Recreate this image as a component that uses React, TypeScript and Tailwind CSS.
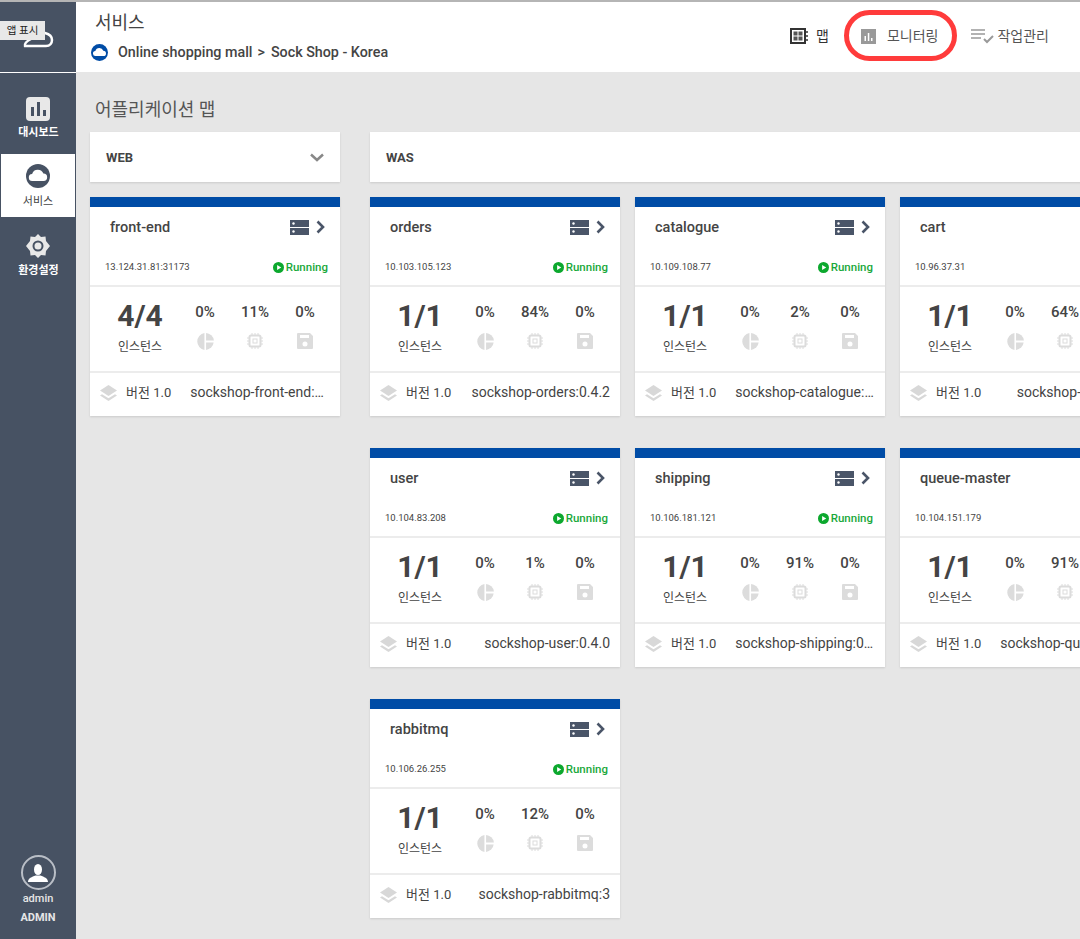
const services = [
    { name: 'orders', ip: '10.103.105.123', running: true, inst: '1/1', cpu: '0%', mem: '84%', disk: '0%', image: 'sockshop-orders:0.4.2' },
    { name: 'catalogue', ip: '10.109.108.77', running: true, inst: '1/1', cpu: '0%', mem: '2%', disk: '0%', image: 'sockshop-catalogue:0.3.5' },
    { name: 'cart', ip: '10.96.37.31', running: true, inst: '1/1', cpu: '0%', mem: '64%', disk: '0%', image: 'sockshop-cart:0.4.0' },
    { name: 'user', ip: '10.104.83.208', running: true, inst: '1/1', cpu: '0%', mem: '1%', disk: '0%', image: 'sockshop-user:0.4.0' },
    { name: 'shipping', ip: '10.106.181.121', running: true, inst: '1/1', cpu: '0%', mem: '91%', disk: '0%', image: 'sockshop-shipping:0.4.8' },
    { name: 'queue-master', ip: '10.104.151.179', running: true, inst: '1/1', cpu: '0%', mem: '91%', disk: '0%', image: 'sockshop-queue-master:0.3.1' },
    { name: 'rabbitmq', ip: '10.106.26.255', running: true, inst: '1/1', cpu: '0%', mem: '12%', disk: '0%', image: 'sockshop-rabbitmq:3' },
];

const frontEnd = { name: 'front-end', ip: '13.124.31.81:31173', running: true, inst: '4/4', cpu: '0%', mem: '11%', disk: '0%', image: 'sockshop-front-end:0.3.12' };

type Service = typeof frontEnd;

function CloudBadge({ className, fill }: { className: string; fill: string }) {
    return (
        <svg className={className} viewBox="0 0 24 24">
            <circle cx="12" cy="12" r="12" fill={fill} />
            <path d="M6.5 17a3.5 3.5 0 0 1-.4-7A6 6 0 0 1 17.4 9.6 3.7 3.7 0 0 1 17.5 17z" fill="#fff" />
        </svg>
    );
}

function ServerIcon() {
    return (
        <svg className="w-[19px] h-[15px]" viewBox="0 0 19 15">
            <rect width="19" height="7" y="0" fill="#4a5568" />
            <rect width="19" height="7" y="8" fill="#4a5568" />
            <circle cx="3.5" cy="3.5" r="1.2" fill="#fff" />
            <circle cx="3.5" cy="11.5" r="1.2" fill="#fff" />
        </svg>
    );
}

function Chevron() {
    return (
        <svg className="w-[9px] h-[14px]" viewBox="0 0 9 14" fill="none" stroke="#4a5568" strokeWidth="2.6">
            <path d="M1.5 1.5 7 7l-5.5 5.5" />
        </svg>
    );
}

function PieIcon() {
    return (
        <svg className="w-[17px] h-[17px]" viewBox="0 0 16 16" fill="#dcdcdc">
            <path d="M7 0.1V15.900A8 8 0 0 1 7 0.100z" />
            <path d="M8.500 0.100A8 8 0 0 1 15.900 7H8.500z" />
            <path d="M8.500 9H15.700A8 8 0 0 1 8.500 15.900z" />
        </svg>
    );
}

function ChipIcon() {
    return (
        <svg className="w-4 h-4" viewBox="0 0 16 16" fill="none" stroke="#dcdcdc">
            <rect x="2.5" y="2.5" width="11" height="11" rx="1.5" strokeWidth="2" />
            <rect x="6" y="6" width="4" height="4" strokeWidth="1" />
            <path d="M5 0v2M8 0v2M11 0v2M5 14v2M8 14v2M11 14v2M0 5h2M0 8h2M0 11h2M14 5h2M14 8h2M14 11h2" strokeWidth="1" />
        </svg>
    );
}

function SaveIcon() {
    return (
        <svg className="w-4 h-4" viewBox="0 0 16 16">
            <path fillRule="evenodd" fill="#dcdcdc" d="M1 0H13l3 3v12a1 1 0 0 1-1 1H1a1 1 0 0 1-1-1V1a1 1 0 0 1 1-1zM3 2v3h9V2zM8 8.500a2.500 2.500 0 1 0 0 5 2.500 2.500 0 0 0 0-5z" />
        </svg>
    );
}

function LayersIcon() {
    return (
        <svg className="w-[17px] h-[16px]" viewBox="0 0 17 16" fill="#d8d8d8">
            <path d="M8.500 0 17 5.500 8.500 11 0 5.500z" />
            <path d="M2 9.200 8.500 13.300 15 9.200 17 10.500 8.500 16 0 10.500z" />
        </svg>
    );
}

function ServiceCard({ service }: { service: Service }) {
    return (
        <div className="w-[250px] h-[219px] shrink-0 bg-white shadow-[0_1px_2px_rgba(0,0,0,0.12)]">
            <div className="h-[10px] bg-[#004ca6]" />
            <div className="h-[80px] border-b-2 border-[#ececec]">
                <div className="flex items-center justify-between pl-5 pr-[15px] pt-[10px]">
                    <span className="text-[14.5px] font-medium text-[#444]">{service.name}</span>
                    <span className="flex items-center gap-[7px] -mt-px">
                        <ServerIcon />
                        <Chevron />
                    </span>
                </div>
                <div className="flex items-center justify-between pl-[15px] pr-3 mt-[20px]">
                    <span className="text-[9.5px] text-[#444]">{service.ip}</span>
                    <span className="flex items-center gap-[2px] text-[11.5px] font-medium text-[#19a83a]">
                        <svg className="w-[11px] h-[11px]" viewBox="0 0 12 12">
                            <circle cx="6" cy="6" r="6" fill="#0ca82e" />
                            <path d="M4.500 3.200 9 6l-4.500 2.800z" fill="#fff" />
                        </svg>
                        {service.running && 'Running'}
                    </span>
                </div>
            </div>
            <div className="h-[86px] border-b-2 border-[#ececec] flex">
                <div className="w-[100px] shrink-0 flex flex-col items-center pt-[11px]">
                    <span className="text-[30px] leading-[36px] font-bold text-[#444]">{service.inst}</span>
                    <span className="text-xs text-[#444] mt-[5px]">인스턴스</span>
                </div>
                <div className="-ml-[10px] w-[150px] shrink-0 grid grid-cols-3 pt-[16px]">
                    {[
                        { value: service.cpu, icon: <PieIcon /> },
                        { value: service.mem, icon: <ChipIcon /> },
                        { value: service.disk, icon: <SaveIcon /> },
                    ].map((stat, i) => (
                        <div key={i} className="flex flex-col items-center gap-[12px]">
                            <span className="text-[15px] leading-[18px] font-medium text-[#444]">{stat.value}</span>
                            {stat.icon}
                        </div>
                    ))}
                </div>
            </div>
            <div className="h-[43px] flex items-center pl-[10px] pr-[10px] pb-[4px]">
                <LayersIcon />
                <span className="ml-[9px] text-[13px] text-[#444] shrink-0">버전 1.0</span>
                <span className="ml-[19px] flex-1 min-w-0 truncate text-right text-sm text-[#444] -mt-[2px]">{service.image}</span>
            </div>
        </div>
    );
}

export default function App() {
    return (
        <div className="relative w-[1080px] h-[939px] overflow-hidden bg-[#e6e6e6] flex font-['Roboto','Noto_Sans_CJK_KR',sans-serif] border-t-2 border-[#b5b5b5]">
            {/* sidebar */}
            <aside className="w-[76px] shrink-0 bg-[#475263] flex flex-col">
                <div className="h-[71px] border-b border-white flex items-center justify-center">
                    <svg className="w-[32px] h-[22px] mt-[4px]" viewBox="22 28 32 22" fill="none" stroke="#fff" strokeWidth="2.500" strokeLinecap="round">
                        <path d="M31 39C27 41 24 43 25 46L46 46C50 46 52 43 52 40 52 36 49 34 45 33" />
                    </svg>
                </div>
                <div className="h-[81px] flex flex-col items-center pt-[24px]">
                    <span className="w-6 h-6 rounded-sm bg-[#e8e8e8] flex items-end justify-center gap-[3px] pb-[5px]">
                        <span className="w-[3px] h-[9px] bg-[#475263]" />
                        <span className="w-[3px] h-[14px] bg-[#475263]" />
                        <span className="w-[3px] h-[6px] bg-[#475263]" />
                    </span>
                    <span className="text-[11px] font-bold text-white mt-[4px] ml-px">대시보드</span>
                </div>
                <div className="h-[63px] mx-px bg-white flex flex-col items-center pt-[10px]">
                    <CloudBadge className="w-6 h-6" fill="#475263" />
                    <span className="text-[11px] text-[#444] mt-[6px]">서비스</span>
                </div>
                <div className="flex flex-col items-center pt-[17px]">
                    <svg className="w-6 h-6" viewBox="0 0 24 24">
                        <path fillRule="evenodd" fill="#e8e8e8" d="M12 0l3 3 4.500-.5.5 4.500 4 5-4 5-.5 4.500-4.500-.5-3 3-3-3-4.500.5-.5-4.500-4-5 4-5 .5-4.500 4.500.5zM12 6.500a5.500 5.500 0 1 0 0 11 5.500 5.500 0 0 0 0-11z" />
                        <circle cx="12" cy="12" r="3.500" fill="#e8e8e8" />
                    </svg>
                    <span className="text-[11px] font-bold text-white mt-[5px] ml-px">환경설정</span>
                </div>
                <div className="mt-auto flex flex-col items-center pb-[13px]">
                    <span className="w-[35px] h-[35px] rounded-full border-2 border-[#b9bec6] flex items-center justify-center">
                        <svg className="w-5 h-5" viewBox="0 0 20 20" fill="#fff">
                            <ellipse cx="10" cy="6.500" rx="4" ry="5.500" />
                            <path d="M0 19c0-4 4-5 7.500-6.500h5C16 14 20 15 20 19z" />
                        </svg>
                    </span>
                    <span className="text-[11px] font-medium text-[#e6e6e6] mt-px">admin</span>
                    <span className="text-[11px] font-bold text-[#e6e6e6] mt-[2px]">ADMIN</span>
                </div>
            </aside>

            <div className="flex-1 min-w-0 flex flex-col">
                {/* header */}
                <header className="h-[70px] shrink-0 bg-white flex justify-between">
                    <div className="pl-[15px] pt-[9px]">
                        <div className="pl-1 text-lg leading-6 text-[#444]">서비스</div>
                        <div className="flex items-center mt-[7px] text-[14.3px] font-medium text-[#444]">
                            <CloudBadge className="w-[17px] h-[17px]" fill="#004ca6" />
                            <span className="ml-[10px]">Online shopping mall</span>
                            <span className="ml-[5px]">&gt;</span>
                            <span className="ml-[6px]">Sock Shop - Korea</span>
                        </div>
                    </div>
                    <nav className="flex items-center h-[68px] pr-[31px] text-sm text-[#555]">
                        <svg className="w-[18px] h-[16px]" viewBox="0 0 18 16">
                            <rect x="1" y="1" width="14" height="14" fill="none" stroke="#333" strokeWidth="2" />
                            <path d="M3.500 3.500h4v4h-4zM8.500 3.500h4v4h-4zM3.500 8.500h4v4h-4zM8.500 8.500h4v4h-4z" fill="#555" />
                            <path d="M16 4h2M16 8h2M16 12h2" stroke="#333" strokeWidth="1.500" />
                        </svg>
                        <span className="ml-[8px] text-[#333]">맵</span>
                        <svg className="ml-[32px] w-[15px] h-[15px]" viewBox="0 0 15 15">
                            <rect width="15" height="15" fill="#999" />
                            <path d="M3.500 7h1.500v5H3.500zM6.800 4h1.500v8H6.800zM10 9h1.500v3H10z" fill="#fff" />
                        </svg>
                        <span className="ml-[11px]">모니터링</span>
                        <svg className="ml-[33px] w-[24px] h-[16px]" viewBox="0 0 24 16" fill="none" stroke="#999" strokeWidth="1.500">
                            <path d="M0 2h14M0 6h14M0 10h10" />
                            <path d="M13 11l3 3 6-6" strokeWidth="2" />
                        </svg>
                        <span className="ml-[2px]">작업관리</span>
                    </nav>
                </header>

                {/* content */}
                <main className="flex-1 pl-[14px]">
                    <h1 className="pl-[5px] pt-[26px] text-lg leading-6 text-[#555]">어플리케이션 맵</h1>
                    <div className="flex gap-[30px] mt-[10px]">
                        <section className="w-[250px] shrink-0">
                            <div className="h-[50px] bg-white shadow-[0_1px_2px_rgba(0,0,0,0.12)] flex items-center justify-between pl-4 pr-[16px] pt-px text-[13px] font-bold text-[#444]">
                                WEB
                                <svg className="w-[14px] h-[9px]" viewBox="0 0 14 9" fill="none" stroke="#888" strokeWidth="2.500">
                                    <path d="M1 1.500 7 7l6-5.500" />
                                </svg>
                            </div>
                            <div className="mt-[15px]">
                                <ServiceCard service={frontEnd} />
                            </div>
                        </section>
                        <section className="flex-1 min-w-0">
                            <div className="h-[50px] w-[780px] bg-white shadow-[0_1px_2px_rgba(0,0,0,0.12)] flex items-center pl-4 pt-px text-[13px] font-bold text-[#444]">
                                WAS
                            </div>
                            <div className="mt-[15px] w-[780px] flex flex-wrap gap-x-[15px] gap-y-[32px]">
                                {services.map((service) => (
                                    <ServiceCard key={service.name} service={service} />
                                ))}
                            </div>
                        </section>
                    </div>
                </main>
            </div>

            {/* tooltip + annotation ring */}
            <div className="absolute left-0 top-[19px] w-[45px] h-[19px] bg-[#e8e8e8] text-[10.5px] leading-[19px] text-center text-[#222]">앱 표시</div>
            <div className="absolute left-[844px] top-[8px] w-[113px] h-[51px] rounded-[26px] border-[5px] border-[#ff3b3b]" />
        </div>
    );
}
